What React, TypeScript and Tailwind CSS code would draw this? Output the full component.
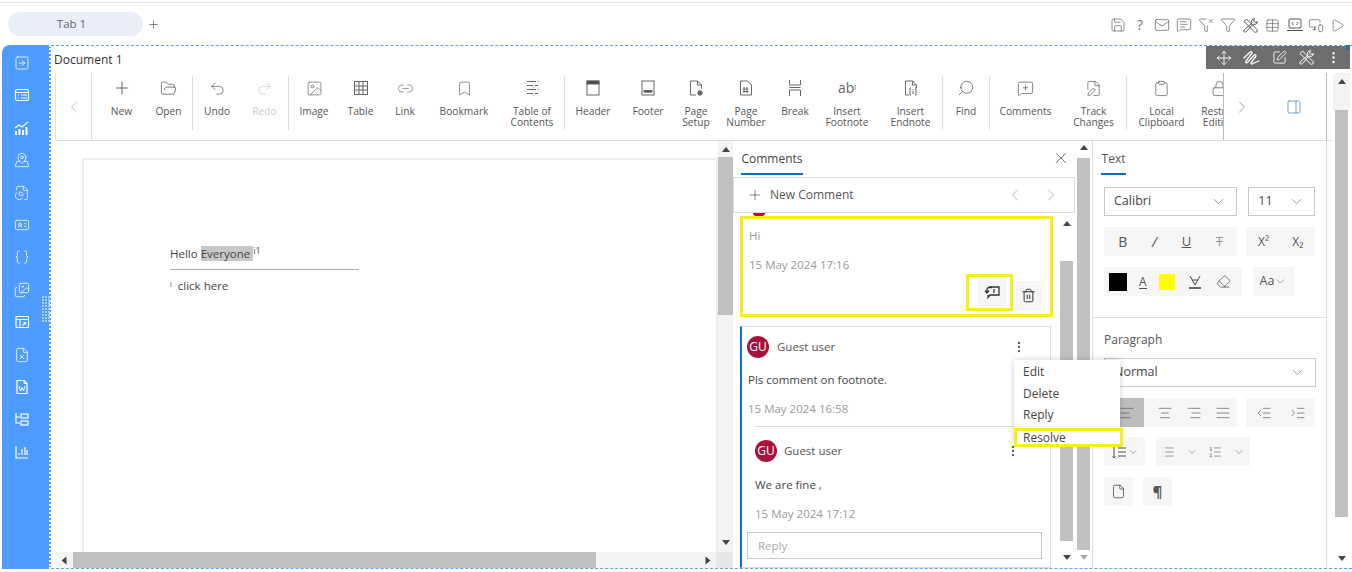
import type { ReactNode } from "react";
import {
  Braces, Bookmark, ChevronDown, ChevronLeft, ChevronRight, Clipboard, EllipsisVertical, File, FileChartPie, FilePen, FileX,
  FolderOpen, Funnel, FunnelX, IdCard, Image as ImageIcon, Images, Link2, List, ListOrdered, Lock, Mail, MapPinned,
  MessageSquarePlus, MessageSquareText, MonitorSmartphone, Move, PanelRight, Play, Plus, Redo2, Save, Search, SquareArrowRight,
  SquarePen, Table, Trash2, Undo2, X, AlignCenter, AlignLeft, AlignRight, AlignJustify, Indent, Outdent, Eraser,
} from "lucide-react";

/** Crossed wrench + screwdriver, used in the top bar and the floating bar. */
function Tools({ color = "#555" }: { color?: string }) {
  return (
    <svg width="17" height="17" viewBox="0 0 17 17" fill="none" stroke={color} strokeWidth="1">
      <path d="M2 4.5 L4.5 2 L15 12.5 Q15.8 14 14.7 15 Q13.5 15.8 12.3 14.7 Z" />
      <path d="M15.5 4.5 Q14 6 12.5 5 L12 4.5 Q11.5 3 12.5 1.5 Q10 2 9.5 4 L10 6 L2 13 Q1.5 14.5 2.5 15 Q3.5 15.5 4.5 14.5 L11 7 Q14.5 8.5 15.5 4.5 Z" />
    </svg>
  );
}

function Scribble({ color = "#fff" }: { color?: string }) {
  return (
    <svg width="18" height="16" viewBox="0 0 18 16" fill="none" stroke={color} strokeWidth="1.3" strokeLinecap="round">
      <path d="M1 8 L7 2 Q9 1 9 3 L3 11 Q2 14 5 12 L11 5 Q13 4 13 6 L8 13 Q8 15 11 13 L16 11" />
    </svg>
  );
}

function Box({ children, color = "#666" }: { children: ReactNode; color?: string }) {
  return (
    <svg width="20" height="20" viewBox="0 0 20 20" fill="none" stroke={color} strokeWidth="1">
      {children}
    </svg>
  );
}

function Rail({ children }: { children: ReactNode }) {
  return (
    <svg width="16" height="16" viewBox="0 0 16 16" fill="none" stroke="#fff" strokeWidth="1.2" className="mr-[7px]">
      {children}
    </svg>
  );
}

const HeaderIcon = () => <Box><rect x="4" y="3" width="12" height="14" /><rect x="4" y="3" width="12" height="3" fill="#444" /></Box>;
const FooterIcon = () => <Box><rect x="4" y="3" width="12" height="14" /><rect x="6" y="12.5" width="8" height="1.6" fill="#444" /></Box>;
const GridIcon = () => <Box><rect x="3.5" y="3.5" width="13" height="13" /><path d="M3.5 8h13M3.5 12h13M8 3.5v13M12 3.5v13" /></Box>;
const TocIcon = () => <Box><path d="M5 3.5h9M15.5 3.5h1M5 7.5h6M13 7.5h3M5 11.5h9M15.5 11.5h1M5 15.5h6M13 15.5h3" /></Box>;
const PageSetupIcon = () => <Box><path d="M10 17H4.5V3h7l4 4v4" /><path d="M11.5 3v4h4" /><circle cx="14" cy="15" r="2.2" fill="#666" /></Box>;
const PageNumberIcon = () => <Box><path d="M4.5 17V3h7l4 4v10z" /><path d="M8 9v6M11 9v6M7 11h5.5M7 13.5h5.5" /></Box>;
const BreakIcon = () => <Box><path d="M4.5 2v5h11V2M4.5 18v-6h11v6M4.5 9.5h11" /></Box>;
const EndnoteIcon = () => <Box><path d="M8 17H4.5V3h7l4 4v3" /><path d="M11.5 3v4h4" /><path d="M10 10h-1v7h1M14 10h1v7h-1M12 11v1M12 13v3" /></Box>;
const ReplyIcon = () => (
  <svg width="18" height="16" viewBox="0 0 18 16" fill="none" stroke="#333" strokeWidth="1.3">
    <path d="M6 3h10v8H7l-2 2.5V11" />
    <path d="M4 8.5V5.5a2 2 0 0 1 2-2h3M2 6.5l2 2.5 2-2.5M11 5v4" />
  </svg>
);
const HighlightIcon = () => (
  <svg width="14" height="16" viewBox="0 0 14 16" fill="none" stroke="#444" strokeWidth="1">
    <path d="M2 2 L7 11 L12 2 M4 6h6" />
    <path d="M1 14h12" strokeWidth="1.6" />
  </svg>
);
const LineSpacingIcon = () => (
  <svg width="16" height="16" viewBox="0 0 16 16" fill="none" stroke="#555" strokeWidth="1">
    <path d="M3 2v12M1.5 12.5L3 14l1.5-1.5M7 4h8M7 8h8M7 12h8" />
  </svg>
);
const LaptopCode = () => (
  <svg width="18" height="16" viewBox="0 0 18 16" fill="none" stroke="#555" strokeWidth="1">
    <rect x="3" y="2" width="12" height="9" rx="1" />
    <path d="M1 13.5h16M7.5 5L6 6.5 7.5 8M10.5 5L12 6.5 10.5 8" />
  </svg>
);

type Tool = { w: string; label: string[]; icon: ReactNode; off?: boolean };

const sep = { sep: true } as const;
const ribbon: (Tool | typeof sep)[] = [
  { w: "w-[47px]", label: ["New"], icon: <Plus size={20} strokeWidth={1} color="#444" /> },
  { w: "w-[47px]", label: ["Open"], icon: <FolderOpen size={17} strokeWidth={1} color="#444" /> },
  sep,
  { w: "w-[48px]", label: ["Undo"], icon: <Undo2 size={17} strokeWidth={1} color="#555" /> },
  { w: "w-[47px]", label: ["Redo"], icon: <Redo2 size={17} strokeWidth={1} color="#ccc" />, off: true },
  sep,
  { w: "w-[50px]", label: ["Image"], icon: <ImageIcon size={17} strokeWidth={1} color="#666" /> },
  { w: "w-[43px]", label: ["Table"], icon: <GridIcon /> },
  { w: "w-[46px]", label: ["Link"], icon: <Link2 size={17} strokeWidth={1} color="#777" /> },
  { w: "w-[72px]", label: ["Bookmark"], icon: <Bookmark size={17} strokeWidth={1} color="#666" /> },
  { w: "w-[64px]", label: ["Table of", "Contents"], icon: <TocIcon /> },
  sep,
  { w: "w-[56px]", label: ["Header"], icon: <HeaderIcon /> },
  { w: "w-[54px]", label: ["Footer"], icon: <FooterIcon /> },
  { w: "w-[42px]", label: ["Page", "Setup"], icon: <PageSetupIcon /> },
  { w: "w-[58px]", label: ["Page", "Number"], icon: <PageNumberIcon /> },
  { w: "w-[40px]", label: ["Break"], icon: <BreakIcon /> },
  { w: "w-[64px]", label: ["Insert", "Footnote"], icon: <span className="text-[14px] leading-none text-[#666]">ab<sup className="text-[7px]">i</sup></span> },
  { w: "w-[63px]", label: ["Insert", "Endnote"], icon: <EndnoteIcon /> },
  sep,
  { w: "w-[46px]", label: ["Find"], icon: <Search size={18} strokeWidth={1} color="#555" className="-scale-x-100" /> },
  sep,
  { w: "w-[71px]", label: ["Comments"], icon: <MessageSquarePlus size={17} strokeWidth={1} color="#555" /> },
  { w: "w-[65px]", label: ["Track", "Changes"], icon: <FilePen size={17} strokeWidth={1} color="#555" /> },
  sep,
  { w: "w-[69px]", label: ["Local", "Clipboard"], icon: <Clipboard size={17} strokeWidth={1} color="#555" /> },
  { w: "w-[46px]", label: ["Restrict", "Editing"], icon: <Lock size={17} strokeWidth={1} color="#555" /> },
];

const railIcon = "mr-[7px]";

function Arrow({ up, light, className = "" }: { up?: boolean; light?: boolean; className?: string }) {
  const c = up ? (light ? "border-b-[#aaa]" : "border-b-[#444]") : light ? "border-t-[#aaa]" : "border-t-[#444]";
  const dir = up ? `border-b-[5px] ${c}` : `border-t-[5px] ${c}`;
  return <div className={`h-0 w-0 border-x-[4px] border-x-transparent ${dir} ${className}`} />;
}

/** Vertical scrollbar: track, thumb and two arrow heads. */
function VBar({ top, thumb, bottom, light, cls }: { top: string; thumb: string; bottom: string; light?: boolean; cls: string }) {
  return (
    <div className={`flex shrink-0 flex-col items-center ${cls}`}>
      <div className={`flex w-full shrink-0 items-center justify-center ${top}`}><Arrow up /></div>
      <div className={`shrink-0 bg-[#c0c0c0] ${thumb}`} />
      <div className="flex-1" />
      <div className={`flex w-full shrink-0 items-center justify-center ${bottom}`}><Arrow light={light} /></div>
    </div>
  );
}

function Avatar({ cls = "" }: { cls?: string }) {
  return <div className={`flex h-[22px] w-[22px] items-center justify-center rounded-full bg-[#a8123c] text-[12px] text-white ${cls}`}>GU</div>;
}

function Select({ label, cls }: { label: string; cls: string }) {
  return (
    <div className={`flex h-[29px] items-center justify-between border border-[#c8c8c8] px-[9px] text-[12.5px] text-[#444] ${cls}`}>
      <span>{label}</span>
      <ChevronDown size={17} strokeWidth={1} color="#777" />
    </div>
  );
}

function Group({ cls, children }: { cls: string; children: ReactNode }) {
  return <div className={`flex h-[29px] items-center bg-[#f6f6f6] text-[#555] ${cls}`}>{children}</div>;
}

export default function App() {
  return (
    <div className="relative flex h-[572px] w-[1352px] flex-col overflow-hidden bg-white font-['Open_Sans',sans-serif] text-[#444]">
      {/* tab strip */}
      <div className="mt-[2px] flex h-[43px] shrink-0 items-center border-t border-[#e4e4e4] pl-2 pr-[7px]">
        <div className="flex h-6 w-[135px] items-center justify-center rounded-xl bg-[#e9eef8] pr-[8px] text-[11.5px] text-[#666]">Tab 1</div>
        <Plus size={13} strokeWidth={1.2} color="#444" className="ml-[4px] mt-[1px]" />
        <div className="ml-auto mt-[2px] flex items-center gap-[6px] text-[#555]">
          <Save size={16} strokeWidth={1} />
          <span className="w-4 text-center text-[14px] leading-none text-[#777]">?</span>
          <Mail size={16} strokeWidth={1} />
          <MessageSquareText size={16} strokeWidth={1} />
          <FunnelX size={16} strokeWidth={1} />
          <Funnel size={16} strokeWidth={1} />
          <Tools />
          <Table size={15} strokeWidth={1} />
          <LaptopCode />
          <MonitorSmartphone size={16} strokeWidth={1} className="-ml-[2px]" />
          <Play size={15} strokeWidth={1} />
        </div>
      </div>

      <div className="flex min-h-0 flex-1 pb-[3px] pl-[2px]">
        {/* left rail */}
        <div className="flex w-[49px] shrink-0 flex-col items-center gap-[16.4px] rounded-tl-lg border-r-2 border-dotted border-white bg-[#4d9bff] pt-[10px]">
          <SquareArrowRight size={16} strokeWidth={1.2} color="#fff" className={railIcon} />
          <Rail><rect x="1.5" y="2.5" width="13" height="11" rx="1.5" /><path d="M1.5 5.5h13M4 8h1M7 8h6M4 11h1M7 11h6" /></Rail>
          <Rail><path d="M1 8l4-3 3 2 6-5" /><path d="M2 15v-4M5.5 15V9M9 15v-5M12.5 15V7" strokeWidth="2" /></Rail>
          <MapPinned size={16} strokeWidth={1.2} color="#fff" className={railIcon} />
          <FileChartPie size={16} strokeWidth={1.2} color="#fff" className={railIcon} />
          <IdCard size={16} strokeWidth={1.2} color="#fff" className={railIcon} />
          <Braces size={16} strokeWidth={1.2} color="#fff" className={railIcon} />
          <Images size={16} strokeWidth={1.2} color="#fff" className={railIcon} />
          <Rail><rect x="2" y="2.5" width="12.5" height="11" rx="1" /><path d="M2 5.5h12.5M6 5.5v8M8.5 11.5l3-3M9.5 8.5h2v2" /></Rail>
          <FileX size={16} strokeWidth={1.2} color="#fff" className={railIcon} />
          <Rail><path d="M3 1.5h7l3 3v10H3z" /><path d="M10 1.5v3h3M5 7l1.5 5L8 8.5 9.5 12 11 7" strokeWidth="1" /></Rail>
          <Rail><path d="M2 2v10h4M2 6h4" /><rect x="7" y="3" width="7" height="4" /><rect x="7" y="10" width="7" height="4" /></Rail>
          <Rail><path d="M2 2v12h12M5 11V9M8 11V5M11 11V3M13 11V6" /></Rail>
        </div>

        <div className="flex min-w-0 flex-1 flex-col border-y border-dashed border-[#5fa3d0] pl-[4px] pr-[2px]">
          <div className="-ml-px flex h-[27px] shrink-0 items-center pt-[1px] text-[12px] text-[#333]">Document 1</div>

          <div className="flex min-h-0 flex-1">
            <div className="flex w-[1278px] shrink-0 flex-col">
              {/* ribbon */}
              <div className="flex h-[68px] shrink-0 border-b border-[#ddd] pr-[6px] text-[10.2px] leading-[11px] text-[#555]">
                <div className="flex w-[37px] shrink-0 items-center justify-center border-x border-[#ddd]">
                  <ChevronLeft size={20} strokeWidth={1} color="#bbb" />
                </div>
                <div className="flex min-w-0 flex-1 overflow-hidden pl-[6px] pt-[3px]">
                  {ribbon.map((t, i) =>
                    "sep" in t ? (
                      <div key={i} className="h-[54px] w-px shrink-0 bg-[#ddd]" />
                    ) : (
                      <div key={i} className={`flex shrink-0 flex-col items-center ${t.w} ${t.off ? "text-[#ccc]" : ""}`}>
                        <div className="flex h-[24px] items-center justify-center">{t.icon}</div>
                        <div className="mt-[6px] text-center whitespace-nowrap">
                          {t.label.map((l) => (
                            <div key={l}>{l}</div>
                          ))}
                        </div>
                      </div>
                    ),
                  )}
                </div>
                <div className="flex w-[104px] shrink-0 items-center border-x border-[#bbb] pl-[8px]">
                  <ChevronRight size={20} strokeWidth={1} color="#888" />
                  <PanelRight size={16} strokeWidth={1} color="#2f74b5" className="ml-[34px]" />
                </div>
              </div>

              <div className="flex min-h-0 flex-1">
                {/* document + its scrollbars */}
                <div className="flex w-[678px] shrink-0 flex-col">
                  <div className="flex min-h-0 flex-1">
                    <div className="min-w-0 flex-1 overflow-hidden pl-[27px] pt-[17px]">
                      <div className="h-[500px] border-2 border-[#eee] pl-[86px] pt-[85px] text-[11.5px] text-[#444]">
                        <div className="h-[25px] w-[189px] border-b border-[#aaa]">
                          Hello <span className="bg-[#c8c8c8]">Everyone </span>
                          <sup className="text-[9px]">i1</sup>
                        </div>
                        <div className="mt-[7px]">
                          <sup className="text-[7px]">i</sup>
                          <span className="ml-[6px]">click here</span>
                        </div>
                      </div>
                    </div>
                    <VBar cls="w-[15px] bg-[#f3f3f3]" top="h-[16px]" thumb="h-[158px] w-full" bottom="h-[16px] pb-[4px]" />
                  </div>
                  <div className="flex h-[16px] shrink-0 items-center bg-[#f3f3f3]">
                    <Arrow up className="ml-[5px] -rotate-90" />
                    <div className="ml-[5px] h-full w-[523px] bg-[#c0c0c0]" />
                    <div className="flex-1" />
                    <Arrow up className="mr-[4px] rotate-90" />
                    <div className="h-full w-[17px] bg-[#e6e6e6]" />
                  </div>
                </div>

                {/* comments */}
                <div className="flex w-[344px] shrink-0 flex-col">
                  <div className="flex h-[36px] shrink-0 items-start pl-[8px]">
                    <div className="flex h-[34px] w-[62px] items-center justify-center border-b-2 border-[#106ebe] pt-[3px] text-[12px] text-[#444]">Comments</div>
                    <X size={18} strokeWidth={1} color="#444" className="ml-auto mr-[7px] mt-[8px]" />
                  </div>
                  <div className="flex h-[36px] w-[342px] shrink-0 items-center border border-[#ddd] px-[13px] text-[12px] text-[#555]">
                    <Plus size={16} strokeWidth={1} color="#444" />
                    <span className="ml-[7px]">New Comment</span>
                    <ChevronLeft size={20} strokeWidth={1} color="#aaa" className="ml-auto" />
                    <ChevronRight size={20} strokeWidth={1} color="#aaa" className="ml-[16px]" />
                  </div>
                  <div className="flex min-h-0 flex-1 pl-[7px]">
                    <div className="w-[313px] shrink-0">
                      <div className="ml-[13px] h-[3px] w-[12px] rounded-b-full bg-[#a8123c]" />
                      {/* first comment, framed */}
                      <div className="h-[101px] w-[313px] border-[3px] border-[#f7ee1c] pl-[6px] pt-[8px] text-[11.5px] text-[#999]">
                        <div>Hi</div>
                        <div className="mt-[12px]">15 May 2024 17:16</div>
                        <div className="flex items-start justify-end gap-[2px] pr-[8px]">
                          <div className="flex h-[37px] w-[47px] items-center justify-end border-[3px] border-[#f7ee1c] pr-[4px]">
                            <div className="flex h-[28px] w-[28px] items-center justify-center bg-[#f6f6f6]">
                              <ReplyIcon />
                            </div>
                          </div>
                          <div className="mt-[7px] flex h-[29px] w-[27px] items-center justify-center bg-[#f6f6f6]">
                            <Trash2 size={15} strokeWidth={1.6} color="#333" />
                          </div>
                        </div>
                      </div>
                      {/* second comment with its reply */}
                      <div className="mt-[9px] h-[242px] w-[311px] border border-l-2 border-[#ddd] border-l-[#106ebe] pl-[6px] pt-[9px] text-[11.5px]">
                        <div className="flex items-center gap-[8px]">
                          <Avatar cls="-ml-px" />
                          <span className="text-[#555]">Guest user</span>
                          <EllipsisVertical size={14} color="#555" className="ml-auto mr-[24px]" />
                        </div>
                        <div className="mt-[13px] text-[#444]">Pls comment on footnote.</div>
                        <div className="mt-[12px] text-[#999]">15 May 2024 16:58</div>
                        <div className="ml-[7px] mt-[8px] border-t border-[#ddd] pt-[13px]">
                          <div className="flex items-center gap-[7px]">
                            <Avatar />
                            <span className="text-[#555]">Guest user</span>
                            <EllipsisVertical size={14} color="#555" className="ml-auto mr-[30px]" />
                          </div>
                          <div className="mt-[14px] text-[#444]">We are fine ,</div>
                          <div className="mt-[12px] text-[#999]">15 May 2024 17:12</div>
                        </div>
                        <div className="-ml-px mt-[10px] flex h-[27px] w-[295px] items-center border border-[#c8c8c8] pl-[10px] text-[#aaa]">Reply</div>
                      </div>
                    </div>
                    <VBar cls="ml-[7px] w-[13px]" top="h-[48px] pb-[28px]" thumb="h-[280px] w-full" bottom="h-[18px] pb-[3px]" />
                  </div>
                </div>

                {/* outer comments scrollbar */}
                <VBar cls="w-[13px]" top="h-[17px] pb-[4px]" thumb="h-[392px] w-full" bottom="h-[18px] pb-[3px]" light />

                {/* properties */}
                <div className="ml-[2px] w-[235px] shrink-0 border-x border-[#ddd] text-[#555]">
                  <div className="ml-[8px] flex h-[34px] w-[25px] items-center justify-center border-b-2 border-[#106ebe] pt-[4px] text-[12px]">Text</div>
                  <div className="px-[11px]">
                    <div className="mt-[12px] flex gap-[11px]">
                      <Select label="Calibri" cls="w-[134px]" />
                      <Select label="11" cls="w-[67px]" />
                    </div>
                    <div className="mt-[11px] flex gap-[9px]">
                      <Group cls="w-[134px] justify-around px-[2px]">
                        <span className="text-[14px]">B</span>
                        <span className="text-[14px] italic">/</span>
                        <span className="text-[13px] underline">U</span>
                        <span className="text-[13px] line-through text-[#999]">T</span>
                      </Group>
                      <Group cls="w-[69px] justify-around text-[12px]">
                        <span>X²</span>
                        <span>X₂</span>
                      </Group>
                    </div>
                    <div className="mt-[11px] flex gap-[11px]">
                      <Group cls="w-[138px] pl-[5px]">
                        <div className="h-[18px] w-[18px] bg-black" />
                        <span className="ml-[12px] border-b border-[#555] text-[12px] leading-[13px]">A</span>
                        <div className="ml-[12px] h-[16px] w-[16px] bg-[#ffff00]" />
                        <span className="ml-[13px]"><HighlightIcon /></span>
                        <Eraser size={15} strokeWidth={1.1} color="#444" className="ml-[14px]" />
                      </Group>
                      <Group cls="w-[41px] justify-center text-[12.5px]">
                        Aa<ChevronDown size={13} strokeWidth={1} />
                      </Group>
                    </div>
                  </div>
                  <div className="mt-[21px] border-t border-[#ddd] px-[11px]">
                    <div className="mt-[13px] text-[12px]">Paragraph</div>
                    <Select label="Normal" cls="mt-[9px] w-[212px]" />
                    <div className="mt-[11px] flex gap-[9px]">
                      <Group cls="w-[134px] justify-around">
                        <div className="flex h-full w-[33px] items-center justify-center bg-[#bdbdbd]"><AlignLeft size={16} strokeWidth={1} /></div>
                        <AlignCenter size={16} strokeWidth={1} />
                        <AlignRight size={16} strokeWidth={1} />
                        <AlignJustify size={16} strokeWidth={1} />
                      </Group>
                      <Group cls="w-[69px] justify-around">
                        <Outdent size={16} strokeWidth={1} />
                        <Indent size={16} strokeWidth={1} />
                      </Group>
                    </div>
                    <div className="mt-[10px] flex gap-[11px]">
                      <Group cls="w-[41px] justify-center">
                        <LineSpacingIcon />
                        <ChevronDown size={12} strokeWidth={1} />
                      </Group>
                      <Group cls="w-[94px] justify-around">
                        <List size={14} strokeWidth={1} />
                        <ChevronDown size={12} strokeWidth={1} />
                        <ListOrdered size={14} strokeWidth={1} />
                        <ChevronDown size={12} strokeWidth={1} />
                      </Group>
                    </div>
                    <div className="mt-[11px] flex gap-[10px]">
                      <Group cls="w-[29px] justify-center"><File size={15} strokeWidth={1.2} color="#444" /></Group>
                      <Group cls="w-[29px] justify-center text-[15px] font-bold text-[#333]">¶</Group>
                    </div>
                  </div>
                </div>
              </div>
            </div>

            {/* page scrollbar, runs beside ribbon and panels */}
            <VBar cls="w-[17px]" top="h-[37px] pb-[21px] bg-[#f3f3f3]" thumb="h-[407px] w-[13px]" bottom="h-[16px] pb-[4px]" />
          </div>
        </div>
      </div>

      {/* floating widget bar */}
      <div className="absolute left-[1206px] top-[46px] flex h-[23px] w-[144px] items-center justify-around bg-[#6e6e6e] px-[4px]">
        <Move size={16} strokeWidth={1.4} color="#fff" />
        <Scribble />
        <SquarePen size={15} strokeWidth={1.4} color="#fff" />
        <Tools color="#fff" />
        <EllipsisVertical size={15} strokeWidth={2} color="#fff" />
      </div>
      <div className="absolute left-[1346px] top-[45px] h-[5px] w-[4px] bg-[#3d6a9e]" />

      {/* resize grip on the rail */}
      <div className="absolute left-[42px] top-[296px] grid grid-cols-3 gap-px">
        {Array.from({ length: 27 }).map((_, i) => (
          <div key={i} className="h-[2px] w-[2px] bg-[#a9cdfb]" />
        ))}
      </div>

      {/* open context menu */}
      <div className="absolute left-[1014px] top-[360px] w-[106px] bg-white pl-[9px] pt-[1px] text-[12px] leading-[21.5px] text-[#444] shadow-[0_0_6px_rgba(0,0,0,0.2)]">
        <div>Edit</div>
        <div>Delete</div>
        <div>Reply</div>
        <div className="h-[15px]" />
      </div>
      <div className="absolute left-[1014px] top-[428px] flex h-[19px] w-[109px] items-center border-[3px] border-[#f7ee1c] bg-white pl-[6px] text-[12px] text-[#444]">Resolve</div>
    </div>
  );
}
